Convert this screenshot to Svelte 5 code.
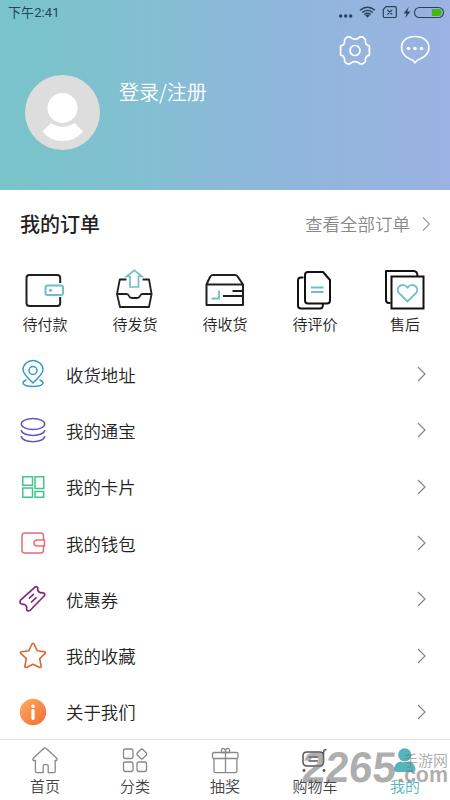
<script>
  const orders = [
    { id: 'pay', label: '待付款' },
    { id: 'ship', label: '待发货' },
    { id: 'receive', label: '待收货' },
    { id: 'review', label: '待评价' },
    { id: 'service', label: '售后' }
  ];
  const rows = [
    { id: 'address', label: '收货地址' },
    { id: 'coins', label: '我的通宝' },
    { id: 'cards', label: '我的卡片' },
    { id: 'wallet', label: '我的钱包' },
    { id: 'coupon', label: '优惠券' },
    { id: 'favorite', label: '我的收藏' },
    { id: 'about', label: '关于我们' }
  ];
  const tabs = [
    { id: 'home', label: '首页' },
    { id: 'category', label: '分类' },
    { id: 'lottery', label: '抽奖' },
    { id: 'cart', label: '购物车' },
    { id: 'mine', label: '我的' }
  ];
</script>

<div class="app">
  <header>
    <div class="status">
      <span class="time">下午2:41</span>
      <svg width="108" height="16" viewBox="337 4 108 16" fill="none" stroke="#27405c">
        <g fill="#27405c" stroke="none">
          <circle cx="340.7" cy="16" r="1.7" /><circle cx="345.7" cy="16" r="1.7" /><circle cx="350.7" cy="16" r="1.7" />
          <path d="M367.5 17.8l-2.3-2.5q2.3-1.8 4.6 0z" />
          <path d="M408.7 7l-5 6.6h3l-1.7 4.7 5.5-6.8h-3.2z" />
        </g>
        <path d="M360 10.3q7.5-6.2 15 0M362.2 12.5q5.3-4.2 10.6 0M364.1 14.5q3.4-2.6 6.8 0" stroke-width="1.4" />
        <path d="M386 6.7h9q1.3 0 1.3 1.3v8.2q0 1.3-1.3 1.3h-10.4q-1.3 0-1.3-1.3V9.5zM387.3 9.7l5 5M392.3 9.7l-5 5" stroke-width="1.2" />
        <path d="M431.8 9h7.2q2.5 0 2.5 2.5v2q0 2.500-2.500 2.500h-7.200z" fill="#43b70f" stroke="none" />
        <rect x="414.500" y="7.500" width="29" height="10" rx="5" stroke-width="1.100" />
      </svg>
    </div>
    <div class="profile">
      <svg class="avatar" width="75" height="75" viewBox="0 0 75 75">
        <circle cx="37.500" cy="37.500" r="37.500" fill="#ddd" />
        <circle cx="37.500" cy="33" r="15" fill="#fff" />
        <path d="M26 48q11.500 7.500 23.500 0l8.500 8.500Q50 66 37.500 66T17.500 56.500z" fill="#fff" />
      </svg>
      <span class="login">登录/注册</span>
      <svg class="tools" width="94" height="34" viewBox="338 34 94 34" fill="none" stroke="#fff" stroke-width="1.700" stroke-linejoin="round">
        <path d="M347.300 36.800h2.400c.8 0 1.300.5 1.600 1.200q3.700 2.300 7.400 0c.3-.7.800-1.200 1.600-1.200h2.400l2.500 2.500c.5.6.4 1.500.1 2.400q.5 3.800 4.100 4.200v9.200q-3.600.6-4.100 4.400c.3.900.4 1.700-.1 2.300l-2.500 2.100h-2.400c-.8 0-1.300-.5-1.600-1.200q-3.700-2.200-7.400 0c-.3.700-.8 1.200-1.600 1.200h-2.400l-2.500-2.100c-.5-.6-.4-1.400-.1-2.300q-.5-3.800-4.100-4.400v-9.200q3.600-.4 4.100-4.200c-.3-.9-.4-1.800.1-2.400z" />
        <circle cx="355" cy="50.500" r="5" />
        <path d="M415 62.800q-1.500-2.800-5-3.800c-12-4.500-12-22.500 5-22.500s18 17.500 5.500 22.300q-3.500 1-5.500 4z" />
        <g fill="#fff" stroke="none"><circle cx="408.500" cy="48.500" r="1.800" /><circle cx="415" cy="48.500" r="1.800" /><circle cx="421.500" cy="48.500" r="1.800" /></g>
      </svg>
    </div>
  </header>

  <section class="orders">
    <div class="heading">
      <h2>我的订单</h2>
      <span class="all">查看全部订单</span>
      <svg width="9" height="16" viewBox="0 0 9 16" fill="none" stroke="#999" stroke-width="1.100"><path d="M1 1.500l6.500 6.500L1 14.500" /></svg>
    </div>
    <div class="order-grid">
      {#each orders as o}
        <div class="order">
          <svg width="44" height="44" viewBox="1 0 44 44" fill="none" stroke="#202020" stroke-width="2" stroke-linejoin="round">
            {#if o.id === 'pay'}
              <path d="M38.200 15V10q0-3-3-3H7.500q-3 0-3 3v25q0 3 3 3h27.700q3 0 3-3v-6" />
              <rect x="23.500" y="17.500" width="17.500" height="9.500" rx="2" stroke="#72bec8" /><circle cx="28.500" cy="22.300" r="1.600" fill="#72bec8" stroke="none" />
            {:else if o.id === 'ship'}
              <path d="M14.500 11.500H7.800L5 26l3 13h29l2.600-13L37 11.500h-6.500M5 26h9.500q1.800 0 2.500 2t3 2h5q2.300 0 3-2t2.500-2h9" stroke-width="1.800" />
              <path d="M18 19V8.500h-3.500L22.300 2.300 30 8.500h-3.500V19z" stroke="#72bec8" stroke-width="1.700" stroke-linejoin="miter" />
            {:else if o.id === 'receive'}
              <path d="M4.500 16.500 8 9q1-2 3-2H33q2 0 3 2l5 7.500V37H4.500zM4.500 16.500H41M30.500 23H41M21 28h20" />
              <path d="M17 22.500v8H9.500" stroke="#72bec8" stroke-width="1.800" stroke-linejoin="miter" />
            {:else if o.id === 'review'}
              <path d="M11.500 9.500H9Q6 9.500 6 12.500v25q0 3 3 3h19q3 0 3-4.500" stroke="#111" />
              <path d="M16 4h15l7 8v20.500q0 3-3 3H16q-3 0-3-3V7q0-3 3-3z" stroke="#111" />
              <path d="M19 19.500h12.500M19 24h12.500" stroke="#72bec8" />
            {:else}
              <path d="M8.500 35H7q-3 0-3-3V3h27.500q4 0 4 5" stroke="#111" />
              <rect x="9.500" y="8.500" width="32" height="32" stroke="#111" stroke-linejoin="miter" />
              <path d="M25.500 33.500l-8.700-8.600c-4.200-5.500 4.500-11.500 8.700-5.200 4.200-6.300 12.900-.3 8.700 5.200z" stroke="#72bec8" stroke-width="1.800" />
            {/if}
          </svg>
          <span>{o.label}</span>
        </div>
      {/each}
    </div>
  </section>

  <nav class="menu">
    {#each rows as r}
      <div class="row">
        <svg class="row-icon" width="30" height="30" viewBox="0 0 30 30" fill="none" stroke-width="1.500" stroke-linejoin="round">
          {#if r.id === 'address'}
            <g stroke="#3299cf"><path d="M15 24Q5 14.800 5 10.800a10 9.300 0 0 1 20 0Q25 14.800 15 24z" /><circle cx="15" cy="11.500" r="4" /><path d="M8.500 21c-6 1.800-4.500 6.500 6.500 6.500s12.500-4.700 6.500-6.500" /></g>
          {:else if r.id === 'coins'}
            <g stroke="#6954b8"><ellipse cx="15" cy="9" rx="11.700" ry="5.500" /><path d="M3.300 15c0 7.200 23.400 7.200 23.400 0M3.300 21c0 7.500 23.400 7.500 23.400 0" /></g>
          {:else if r.id === 'cards'}
            <g stroke="#40c58b" stroke-linejoin="miter"><path d="M4.800 4.700h9.700v8.600H4.800zM17 4.700h8.700v11.800H17zM4.800 16h9.700v9.200H4.800zM17 19.500h8.700v5.700H17z" /></g>
          {:else if r.id === 'wallet'}
            <g stroke="#e76c70"><path d="M25.500 11.500V8q0-3-3-3h-16Q4 5 4 8v14q0 3 2.500 3h16q3 0 3-3v-3.500M26.500 12h-7q-3.500 0-3.500 3t3.500 3h7z" /></g>
          {:else if r.id === 'coupon'}
            <g stroke="#87257c" stroke-width="1.700"><path d="M2.500 16.200 17.300 2.800q1.500-.8 2.500.8-.8 3.800 2.700 5.200 2.300-.3 3.900.6.900 1.500-.3 2.600L12 26.500q-2.300 1-3.400-.6.800-4.500-2.600-5.600-2.500.3-3.600-1-.9-1.500.1-3.100zM11.500 14l4-3.700M13.500 18l4.500-4.200" stroke-linecap="round" /></g>
          {:else if r.id === 'favorite'}
            <path d="M14 3q1-1.300 2 0l3.200 6.700 7.500 1q1.300.5.500 1.700l-5.500 5.200 1.500 8q-.2 1.200-1.600.9L15 23.200l-6.600 3.300q-1.400.3-1.600-.9l1.500-8-5.500-5.200q-.8-1.200.5-1.700l7.500-1z" stroke="#dc682f" stroke-width="1.600" />
          {:else}
            <defs><linearGradient id="info" x2="1" y2="1"><stop stop-color="#ffac60" /><stop offset="1" stop-color="#f36c35" /></linearGradient></defs>
            <circle cx="15" cy="15" r="13.200" fill="url(#info)" /><circle cx="15" cy="9.200" r="1.800" fill="#fff" /><path d="M15 13.500v8" stroke="#fff" stroke-width="3.200" stroke-linecap="round" />
          {/if}
        </svg>
        <span>{r.label}</span>
        <svg width="9" height="16" viewBox="0 0 9 16" fill="none" stroke="#858585" stroke-width="1.200"><path d="M1 1l7 7-7 7" /></svg>
      </div>
    {/each}
  </nav>

  <footer>
    {#each tabs as t}
      <div class="tab" class:active={t.id === 'mine'}>
        <svg width="30" height="30" viewBox="0 0 30 30" fill="none" stroke="#888" stroke-width="1.300" stroke-linejoin="round">
          {#if t.id === 'home'}
            <path d="M4.500 15.500h-1q-1.500-1 0-2.400L14 3.300q1-.8 2 0l10.700 9.900q1.200 1.400-.3 2.300h-1.200V26q0 1.600-1.600 1.600h-5.400V21q0-1.300-1.300-1.300h-2.400q-1.300 0-1.300 1.300v6.600H7q-1.600 0-1.600-1.600V15.500z" />
          {:else if t.id === 'category'}
            <rect x="3.500" y="4" width="9.500" height="9.500" rx="2" /><rect x="3.500" y="17" width="9.500" height="9.500" rx="2" /><rect x="17" y="17" width="9.500" height="9.500" rx="2" /><path d="M20.800 4.500q1-1 2 0l3.500 3.500q1 1 0 2l-3.500 3.500q-1 1-2 0L17.300 10q-1-1 0-2z" />
          {:else if t.id === 'lottery'}
            <rect x="2.500" y="7.500" width="25.500" height="6" rx="1.500" /><path d="M4 13.500V26q0 1.700 1.700 1.700h19.500q1.700 0 1.700-1.700V13.500M15.500 7.500v20M15.500 7.500h-3.700c-2-5 3.700-5.500 3.700-1 0-4.500 5.700-4 3.700 1z" />
          {:else if t.id === 'cart'}
            <path d="M26.500 4.500q-3 0-3 3v9.500q0 4-4 4H7q-4 0-4-4v-6q0-4 4-4h12.500q4 0 4 4M8.500 12h9.500M8.500 16h9.500" stroke="#555" stroke-width="1.500" /><circle cx="4" cy="25.500" r="1.400" fill="#555" stroke="none" /><circle cx="24" cy="25.500" r="1.400" fill="#555" stroke="none" />
          {:else}
            <g fill="#56b4bc" stroke="none"><circle cx="14.700" cy="9.800" r="6.600" /><path d="M4 24q1-7 7-7.500 4 2 7.500 0 6 .5 7 7.500 0 3-3 3H7q-3 0-3-3z" /></g>
          {/if}
        </svg>
        <span>{t.label}</span>
      </div>
    {/each}
  </footer>

  <div class="mark" aria-hidden="true">
    <svg width="150" height="80" viewBox="300 720 150 80">
      <g fill="#777" fill-opacity=".6">
        <g transform="translate(301 782) skewX(-5)"><text x="0" y="0" font-size="43" font-weight="700" textLength="94" lengthAdjust="spacingAndGlyphs">2265</text></g>
        <text x="398" y="782" font-size="22" font-weight="700" textLength="50" lengthAdjust="spacingAndGlyphs">.com</text>
        <text class="cjk" x="403" y="766" font-size="15" font-weight="400">手游网</text>
      </g>
    </svg>
  </div>
</div>

<style>
  :global(body) { margin: 0; background: #fff; }
  .app {
    position: relative; width: 450px; height: 800px; overflow: hidden;
    display: flex; flex-direction: column; background: #fff; color: #222;
    font-family: "Noto Sans CJK SC", sans-serif;
  }
  svg { display: block; flex: none; }
  header { height: 190px; background: linear-gradient(90deg, #78c4c9 0%, #84bfd3 35%, #8bb9d8 50%, #9bb2e2 100%); }
  .status { height: 26px; padding: 0 5px 0 8px; display: flex; align-items: center; justify-content: space-between; }
  .time { font: 13px/26px Roboto, "Noto Sans CJK SC", sans-serif; letter-spacing: .1px; color: #24465a; }
  .status svg { margin-top: -2px; }
  .profile { display: flex; align-items: flex-start; padding: 8px 18px 0 25px; }
  .avatar { margin-top: 41px; }
  .login { margin: 43px 0 0 19px; flex: 1; color: #fff; font-size: 20px; line-height: 30px; font-weight: 350; }
  .orders { height: 156px; }
  .heading { height: 68px; display: flex; align-items: center; padding: 0 19px 0 20px; }
  h2 { flex: 1; margin: 0; font-size: 20px; font-weight: 500; line-height: 30px; }
  .all { margin-right: 12px; color: #888; font-size: 17.500px; line-height: 26px; font-weight: 350; }
  .order-grid { display: flex; padding-top: 10px; }
  .order { width: 90px; display: flex; flex-direction: column; align-items: center; font-size: 15px; line-height: 22px; font-weight: 350; }
  .order svg { margin-bottom: 1px; }
  .order span { white-space: nowrap; }
  .menu { height: 393px; }
  .row { height: 56.300px; display: flex; align-items: center; padding: 0 24px 0 18px; font-size: 17.400px; font-weight: 350; }
  .row span { flex: 1; margin-left: 18px; }
  footer { height: 60px; border-top: 1px solid #ddd; display: flex; background: #fff; }
  .tab { width: 90px; display: flex; flex-direction: column; align-items: center; padding-top: 5px; font-size: 15px; line-height: 22px; color: #444; font-weight: 350; }
  .active { color: #56b4bc; }
  .mark { position: absolute; left: 300px; bottom: 0; pointer-events: none; }
  .mark text { font-family: "Liberation Sans", sans-serif; }
  .mark .cjk { font-family: "Noto Sans CJK SC", sans-serif; }
</style>
